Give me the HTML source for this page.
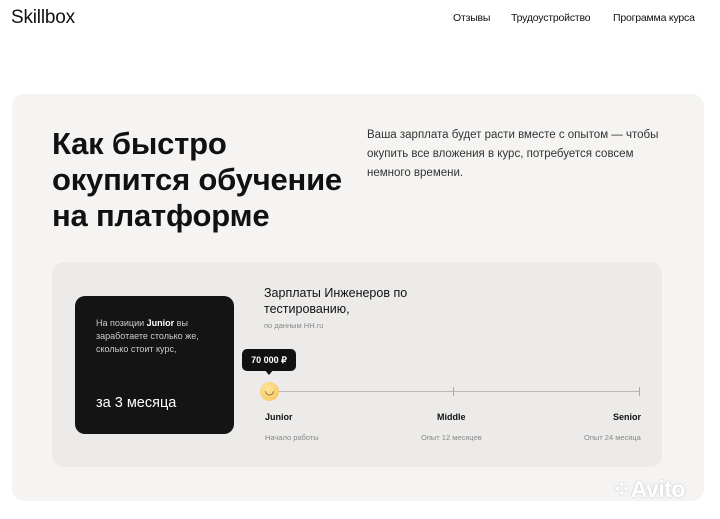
<!DOCTYPE html>
<html><head><meta charset="utf-8"><style>
*{margin:0;padding:0;box-sizing:border-box}
body{width:720px;height:519px;background:#fff;font-family:"Liberation Sans","Noto Sans CJK JP",sans-serif;color:#111;position:relative;overflow:hidden}
.abs{position:absolute}
.logo{left:11px;top:7px;font-size:19px;font-weight:400;letter-spacing:-0.2px}
.nav{top:12px;font-size:10.5px;color:#111;letter-spacing:-0.2px}
.panel{left:12px;top:94px;width:692px;height:407px;background:#f5f4f2;border-radius:12px}
h1{position:absolute;left:52px;top:126px;font-size:31px;line-height:36px;font-weight:700;letter-spacing:-0.2px}
.desc{left:367px;top:126px;font-size:11.5px;line-height:19px;color:#333;width:300px}
.card{left:52px;top:262px;width:610px;height:205px;background:#ecebe9;border-radius:12px}
.black{left:75px;top:296px;width:159px;height:138px;background:#141414;border-radius:10px;color:#fff}
.small{font-size:9px;line-height:13px;color:#ccc}
.line{left:269px;top:391px;width:370px;height:1px;background:#bdbbb8}
.tick{width:1px;height:9px;background:#aaa;top:387px}
.lab{font-size:9px;font-weight:700;top:412px}
.sub{font-size:7.5px;color:#888;top:433px}
</style></head><body>
<div class="abs logo">Skillbox</div>
<div class="abs nav" style="left:453px">Отзывы</div>
<div class="abs nav" style="left:511px">Трудоустройство</div>
<div class="abs nav" style="left:613px">Программа курса</div>
<div class="abs panel"></div>
<h1>Как быстро<br>окупится обучение<br>на платформе</h1>
<div class="abs desc">Ваша зарплата будет расти вместе с опытом — чтобы окупить все вложения в курс, потребуется совсем немного времени.</div>
<div class="abs card"></div>
<div class="abs black">
 <div class="abs small" style="left:21px;top:21px;width:130px">На позиции <b style="color:#fff">Junior</b> вы заработаете столько же, сколько стоит курс,</div>
 <div class="abs" style="left:21px;top:99px;font-size:14.5px">за 3 месяца</div>
</div>
<div class="abs" style="left:264px;top:285px;font-size:12.5px;line-height:16px;font-weight:500">Зарплаты Инженеров по<br>тестированию,</div>
<div class="abs" style="left:264px;top:321px;font-size:7.5px;color:#888">по данным HH.ru</div>
<div class="abs" style="left:242px;top:349px;width:54px;height:22px;background:#111;border-radius:5px;color:#fff;font-size:9px;font-weight:700;text-align:center;line-height:22px">70 000 ₽</div>
<div class="abs" style="left:264px;top:369px;width:0;height:0;border-left:5px solid transparent;border-right:5px solid transparent;border-top:6px solid #111"></div>
<div class="abs line"></div>
<div class="abs tick" style="left:453px"></div>
<div class="abs tick" style="left:639px"></div>
<div class="abs" style="left:260px;top:382px;width:19px;height:19px;border-radius:50%;background:radial-gradient(circle at 40% 35%,#fde59a,#f6c25a);font-size:11px;text-align:center;line-height:19px;color:#6a4a10">◡</div>
<div class="abs lab" style="left:265px">Junior</div>
<div class="abs lab" style="left:437px">Middle</div>
<div class="abs lab" style="left:613px">Senior</div>
<div class="abs sub" style="left:265px">Начало работы</div>
<div class="abs sub" style="left:421px">Опыт 12 месяцев</div>
<div class="abs sub" style="left:584px">Опыт 24 месяца</div>
<div class="abs" style="left:612px;top:476px;font-size:23px;font-weight:700;color:#fff;text-shadow:0 0 2px #bbb;letter-spacing:-0.5px">⁘Avito</div>
</body></html>
